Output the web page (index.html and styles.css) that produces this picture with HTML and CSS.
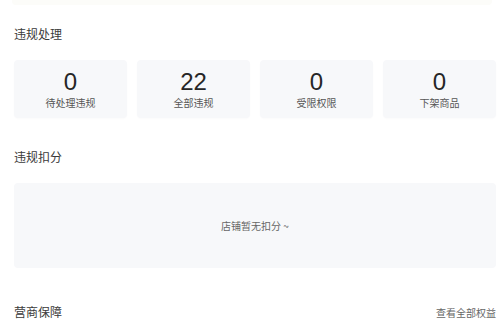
FILE: index.html
```html
<!DOCTYPE html>
<html lang="zh-CN">
<head>
    <meta charset="UTF-8">
    <meta name="viewport" content="width=device-width, initial-scale=1.0">
    <title>违规处理</title>
    <link rel="stylesheet" href="styles.css">
</head>
<body>
    <div class="top-strip"></div>

    <section class="section">
        <div class="section-head">
            <h2>违规处理</h2>
        </div>
        <div class="stat-row">
            <div class="stat-card">
                <div class="stat-num">0</div>
                <div class="stat-label">待处理违规</div>
            </div>
            <div class="stat-card">
                <div class="stat-num">22</div>
                <div class="stat-label">全部违规</div>
            </div>
            <div class="stat-card">
                <div class="stat-num">0</div>
                <div class="stat-label">受限权限</div>
            </div>
            <div class="stat-card">
                <div class="stat-num">0</div>
                <div class="stat-label">下架商品</div>
            </div>
        </div>
    </section>

    <section class="section">
        <div class="section-head">
            <h2>违规扣分</h2>
        </div>
        <div class="empty-box">店铺暂无扣分 ~</div>
    </section>

    <section class="section section-last">
        <div class="section-head">
            <h2>营商保障</h2>
            <a class="more-link" href="#">查看全部权益</a>
        </div>
    </section>
</body>
</html>
```

FILE: styles.css
```css
body {
    margin: 0;
    background-color: #ffffff;
    color: #333333;
    font-family: "Noto Sans CJK SC", "Liberation Sans", sans-serif;
}

.top-strip {
    height: 5px;
    margin: 0 12px;
    background-color: #fcfcf9;
    border-radius: 0 0 4px 4px;
}

.section {
    padding: 19px 8px 0 14px;
}

.section + .section {
    padding-top: 29px;
}

.section-last {
    margin-top: 5px;
}

.section-head {
    display: flex;
    justify-content: space-between;
    align-items: center;
    height: 20px;
    margin-bottom: 16px;
}

.section-head h2 {
    margin: 0;
    font-size: 12px;
    font-weight: normal;
    color: #3a3a3a;
    line-height: 20px;
}

.more-link {
    font-size: 10px;
    color: #666666;
    text-decoration: none;
}

.stat-row {
    display: grid;
    grid-template-columns: repeat(4, 1fr);
    gap: 10px;
}

.stat-card {
    background-color: #f7f8fa;
    border-radius: 4px;
    padding: 8px 0;
    text-align: center;
    box-shadow: 0 1px 2px rgba(0, 0, 0, 0.02);
}

.stat-num {
    font-family: "Liberation Sans", Arial, sans-serif;
    font-size: 24px;
    line-height: 28px;
    color: #262626;
}

.stat-label {
    font-size: 10px;
    line-height: 14px;
    color: #555555;
}

.empty-box {
    height: 85px;
    background-color: #f7f8fa;
    border-radius: 4px;
    display: flex;
    justify-content: center;
    align-items: center;
    font-size: 10px;
    color: #666666;
}
```
